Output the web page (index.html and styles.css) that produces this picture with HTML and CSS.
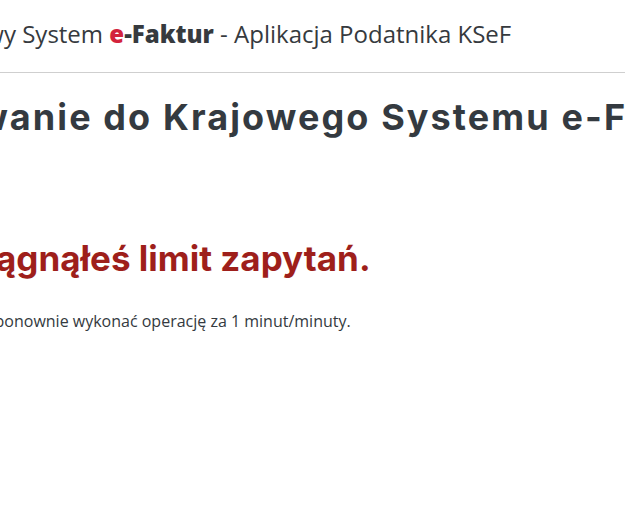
FILE: index.html
```html
<!DOCTYPE html>
<html lang="pl">
<head>
<meta charset="utf-8">
<title>Krajowy System e-Faktur</title>
<link rel="stylesheet" href="styles.css">
</head>
<body>
<header class="topbar">
  <div class="brand">Krajowy System <span class="brand-strong"><span class="brand-e">e</span>-Faktur</span> - Aplikacja Podatnika KSeF</div>
</header>
<main class="content">
  <h1 class="title">Logowanie do Krajowego Systemu e-Faktur</h1>
  <section class="notice">
    <h2 class="notice-title">Osiągnąłeś limit zapytań.</h2>
    <p class="notice-text">Spróbuj ponownie wykonać operację za 1 minut/minuty.</p>
  </section>
</main>
</body>
</html>
```
FILE: styles.css
```css
html, body {
  margin: 0;
  padding: 0;
  background: #ffffff;
  overflow: hidden;
}
body {
  font-family: "Open Sans", "Liberation Sans", sans-serif;
  color: #343a40;
}
.topbar {
  margin-left: -73px;
  padding: 16px 0 20px 0;
  border-bottom: 1px solid #cfcfcf;
}
.brand {
  font-size: 24px;
  line-height: 36px;
  color: #363a3e;
  white-space: nowrap;
}
.brand-strong {
  font-weight: 800;
}
.brand-e {
  color: #d3233c;
}
.content {
  margin-left: -118px;
  padding-top: 23px;
}
.title {
  margin: 0;
  font-family: Inter, "Liberation Sans", sans-serif;
  font-weight: 700;
  font-size: 36px;
  line-height: 1.2;
  letter-spacing: 2.1px;
  color: #343a40;
  white-space: nowrap;
}
.notice {
  margin-left: 50px;
  padding-top: 98px;
}
.notice-title {
  margin: 0 0 0 8px;
  font-family: Inter, "Liberation Sans", sans-serif;
  font-weight: 700;
  font-size: 35px;
  line-height: 1.2;
  color: #9e1f1b;
  white-space: nowrap;
}
.notice-text {
  margin: 30px 0 0 0;
  font-size: 16px;
  line-height: 1.5;
  color: #343a40;
  white-space: nowrap;
}
```
